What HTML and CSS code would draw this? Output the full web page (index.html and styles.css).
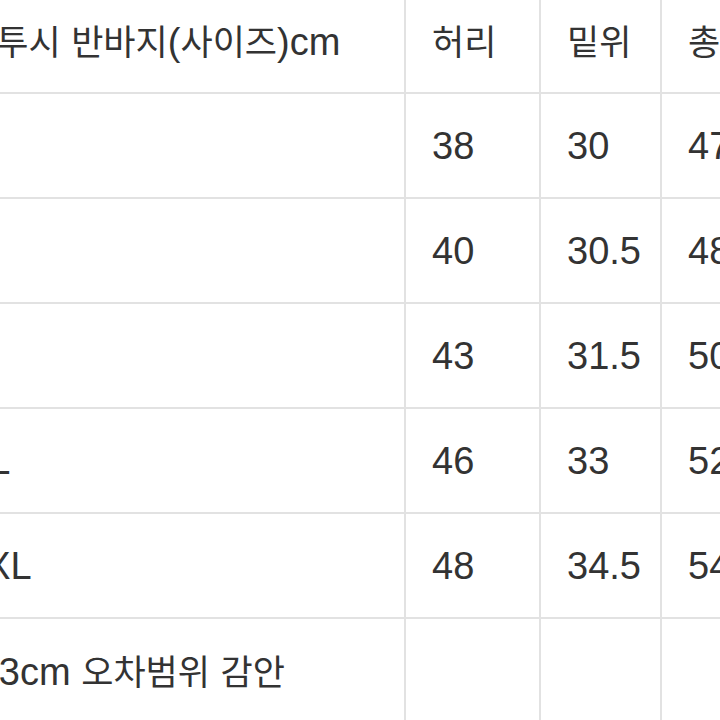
FILE: index.html
```html
<!DOCTYPE html>
<html lang="ko">
<head>
<meta charset="utf-8">
<link rel="stylesheet" href="styles.css">
</head>
<body>
<table class="size-table">
  <colgroup>
    <col class="c-name">
    <col class="c-waist">
    <col class="c-rise">
    <col class="c-len">
    <col class="c-more">
  </colgroup>
  <tr><td><span class="ko">쿨투시</span> <span class="ko">반바지</span>(<span class="ko">사이즈</span>)cm</td><td><span class="ko">허리</span></td><td><span class="ko">밑위</span></td><td><span class="ko">총장</span></td><td><span class="ko">허벅지</span></td></tr>
  <tr><td>S</td><td>38</td><td>30</td><td>47</td><td>30</td></tr>
  <tr><td>M</td><td>40</td><td>30.5</td><td>48</td><td>31</td></tr>
  <tr><td>L</td><td>43</td><td>31.5</td><td>50</td><td>32</td></tr>
  <tr><td>XL</td><td>46</td><td>33</td><td>52</td><td>33</td></tr>
  <tr><td>2XL</td><td>48</td><td>34.5</td><td>54</td><td>34</td></tr>
  <tr><td>+-3cm <span class="ko">오차범위</span> <span class="ko">감안</span></td><td></td><td></td><td></td><td></td></tr>
</table>
</body>
</html>
```
FILE: styles.css
```css
html, body {
  margin: 0;
  padding: 0;
  background: #ffffff;
  overflow: hidden;
}
body {
  width: 720px;
  height: 720px;
}
.size-table {
  border-collapse: collapse;
  table-layout: fixed;
  margin-top: -13px;
  margin-left: -64px;
  width: 1000px;
  font-family: "Liberation Sans", "Noto Sans CJK KR", sans-serif;
  font-size: 38px;
  color: #333333;
}
.c-name { width: 468px; }
.c-waist { width: 135px; }
.c-rise { width: 121px; }
.c-len { width: 135px; }
.c-more { width: 141px; }
.size-table td {
  border: 2px solid #e2e2e2;
  height: 103px;
  padding: 0 0 0 26px;
  box-sizing: border-box;
  line-height: 40px;
  vertical-align: middle;
  white-space: nowrap;
  overflow: hidden;
}
.size-table tr {
  height: 105px;
}
.ko {
  font-family: "Noto Sans CJK KR", sans-serif;
  font-size: 35px;
}
```
